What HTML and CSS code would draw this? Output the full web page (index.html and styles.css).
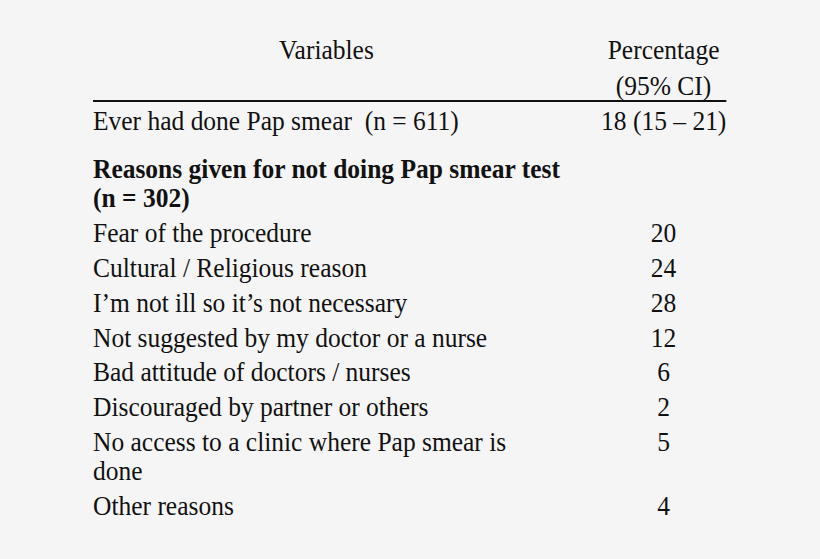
FILE: index.html
```html
<!DOCTYPE html>
<html>
<head>
<meta charset="utf-8">
<link rel="stylesheet" href="styles.css">
</head>
<body>
<div class="page">
  <div class="table">
    <div class="head">
      <div class="hcell var">
        <div class="hline">Variables</div>
      </div>
      <div class="hcell pct">
        <div class="hline">Percentage</div>
        <div class="hline">(95% CI)</div>
      </div>
    </div>
    <div class="row first">
      <div class="label">Ever had done Pap smear&nbsp; (n = 611)</div>
      <div class="val right">18 (15 – 21)</div>
    </div>
    <div class="row section">
      <div class="label bold">Reasons given for not doing Pap smear test<br>(n = 302)</div>
      <div class="val"></div>
    </div>
    <div class="row"><div class="label">Fear of the procedure</div><div class="val">20</div></div>
    <div class="row"><div class="label">Cultural / Religious reason</div><div class="val">24</div></div>
    <div class="row"><div class="label">I’m not ill so it’s not necessary</div><div class="val">28</div></div>
    <div class="row"><div class="label">Not suggested by my doctor or a nurse</div><div class="val">12</div></div>
    <div class="row"><div class="label">Bad attitude of doctors / nurses</div><div class="val">6</div></div>
    <div class="row"><div class="label">Discouraged by partner or others</div><div class="val">2</div></div>
    <div class="row"><div class="label">No access to a clinic where Pap smear is<br>done</div><div class="val">5</div></div>
    <div class="row"><div class="label">Other reasons</div><div class="val">4</div></div>
  </div>
</div>
</body>
</html>
```
FILE: styles.css
```css
html, body {
  margin: 0;
  padding: 0;
  background: #f5f5f5;
}
.page {
  width: 820px;
  height: 559px;
  box-sizing: border-box;
  padding: 35px 0 0 93px;
  overflow: hidden;
  font-family: "Liberation Serif", "Times New Roman", serif;
  font-size: 28px;
  line-height: 29px;
  color: #111;
}
.table {
  width: 696px;
  transform: scaleX(0.91);
  transform-origin: left top;
}
.head {
  display: grid;
  grid-template-columns: 1fr 149px;
  border-bottom: 2px solid #111;
}
.hline + .hline {
  margin-top: 7px;
}
.hcell.var {
  text-align: center;
  padding-right: 34px;
}
.hcell.pct {
  text-align: center;
  padding-left: 11px;
}
.row {
  display: grid;
  grid-template-columns: 1fr 149px;
  padding: 2.9px 0;
}
.row.first {
  padding-top: 3.5px;
}
.row.section {
  padding-top: 17px;
}
.val {
  text-align: center;
  padding-left: 11px;
}
.val.right {
  text-align: right;
  padding-left: 0;
}
.bold {
  font-weight: bold;
}
```
